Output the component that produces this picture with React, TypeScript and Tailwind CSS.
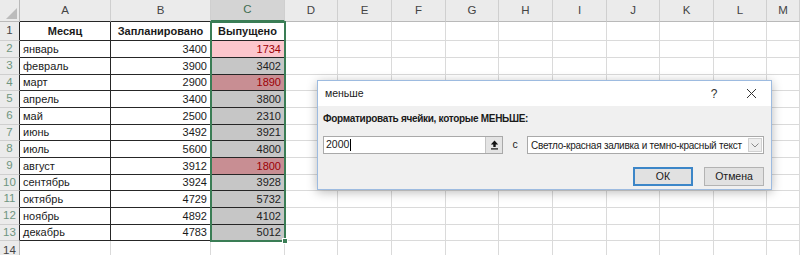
import React from "react";

const months = ["январь","февраль","март","апрель","май","июнь","июль","август","сентябрь","октябрь","ноябрь","декабрь"];
const planned = [3400,3900,2900,3400,2500,3492,5600,3912,3924,4729,4892,4783];
const released = [1734,3402,1890,3800,2310,3921,4800,1800,3928,5732,4102,5012];

const rowHeights = [19,17,17,16,17,17,16,17,17,16,17,17,16,20];
const extraCols = [
  { l: "D", w: "w-[53px]" },
  { l: "E", w: "w-[54px]" },
  { l: "F", w: "w-[54px]" },
  { l: "G", w: "w-[53px]" },
  { l: "H", w: "w-[54px]" },
  { l: "I", w: "w-[54px]" },
  { l: "J", w: "w-[53px]" },
  { l: "K", w: "w-[54px]" },
  { l: "L", w: "w-[53px]" },
  { l: "M", w: "w-[33px]" },
];

function cFill(i: number) {
  if (i === 0) return "bg-[#fcc6cc] text-[#9c0006]";
  if (i === 2 || i === 7) return "bg-[#c88e93] text-[#9c0006]";
  return "bg-[#c6c6c6] text-[#222]";
}

export default function App() {
  return (
    <div className="relative w-[800px] h-[255px] overflow-hidden bg-white font-['Liberation_Sans',Arial,sans-serif] text-[11px] text-[#1a1a1a]">
      {/* Column header row */}
      <div className="flex h-[22px] bg-[#ebebeb] text-[#444] text-[11.5px]">
        <div className="relative w-[20px] border-r border-b border-[#b9b9b9]">
          <svg className="absolute left-0 top-0" width="20" height="22" viewBox="0 0 20 22">
            <polygon points="17,8 17,19 6,19" fill="#bcbcbc" />
          </svg>
        </div>
        <div className="w-[91px] flex items-center justify-center border-r border-b border-r-[#cfcfcf] border-b-[#262626]">A</div>
        <div className="w-[100px] flex items-center justify-center border-r border-b border-r-[#cfcfcf] border-b-[#262626]">B</div>
        <div className="w-[74px] flex items-center justify-center bg-[#d4d4d4] text-[#3f6e52] border-r border-b-2 border-r-[#cfcfcf] border-b-[#3a7d55]">C</div>
        {extraCols.map((c) => (
          <div key={c.l} className={`${c.w} flex items-center justify-center border-r border-b border-r-[#cfcfcf] border-b-[#b9b9b9]`}>
            {c.l}
          </div>
        ))}
      </div>

      {rowHeights.map((h, r) => {
        const isData = r >= 1 && r <= 12;
        const inTable = r <= 12;
        const hClass =
          h === 19 ? "h-[19px]" : h === 17 ? "h-[17px]" : h === 16 ? "h-[16px]" : "h-[20px]";
        const tb = inTable ? "border-[#262626]" : "border-[#dadada]";
        return (
          <div key={r} className={`flex ${hClass}`}>
            <div
              className={`w-[20px] flex items-center justify-center bg-[#ebebeb] text-[11.5px] border-b border-r ${
                inTable ? "border-b-[#cfcfcf] border-r-[#262626]" : "border-b-[#cfcfcf] border-r-[#b9b9b9]"
              } ${isData ? "text-[#6f9580]" : "text-[#444]"}`}
            >
              {r + 1}
            </div>
            <div className={`w-[91px] flex items-center px-[3px] border-r border-b ${tb} ${r === 0 ? "justify-center font-bold" : ""}`}>
              {r === 0 ? "Месяц" : isData ? months[r - 1] : ""}
            </div>
            <div className={`w-[100px] flex items-center px-[3px] border-r border-b ${tb} ${r === 0 ? "justify-center font-bold" : "justify-end"}`}>
              {r === 0 ? "Запланировано" : isData ? planned[r - 1] : ""}
            </div>
            <div
              className={`w-[74px] flex items-center px-[3px] border-r border-b ${tb} ${
                r === 0 ? "justify-center font-bold" : "justify-end"
              } ${isData ? cFill(r - 1) : ""}`}
            >
              {r === 0 ? "Выпущено" : isData ? released[r - 1] : ""}
            </div>
            {extraCols.map((c) => (
              <div key={c.l} className={`${c.w} border-r border-b border-[#dadada]`} />
            ))}
          </div>
        );
      })}

      {/* selection rectangle C1:C13 */}
      <div className="absolute left-[210px] top-[21px] w-[76px] h-[221px] border-2 border-[#3a7d55] pointer-events-none" />
      <div className="absolute left-[282px] top-[238px] w-[6px] h-[6px] bg-[#3a7d55] border border-white" />

      {/* Dialog */}
      <div className="absolute left-[317px] top-[80px] w-[455px] h-[110px] flex flex-col border border-[#9dbbe0] bg-[#f0f0f0] shadow-[0_2px_10px_rgba(0,0,0,0.28)] font-['Liberation_Sans',Arial,sans-serif] text-[10.5px] text-[#1a1a1a]">
        <div className="h-[25px] bg-white flex items-center pl-[7px]">
          <span className="flex-1">меньше</span>
          <span className="w-[20px] text-center text-[12px] text-[#333] mr-[17px]">?</span>
          <span className="w-[20px] flex items-center justify-center mr-[10px]">
            <svg width="11" height="11" viewBox="0 0 11 11">
              <path d="M1 1 L10 10 M10 1 L1 10" stroke="#333" strokeWidth="1" fill="none" />
            </svg>
          </span>
        </div>
        <div className="flex-1 flex flex-col px-[5px]">
          <div className="mt-[6px] h-[14px] leading-[14px] font-bold text-[10px] tracking-[-0.3px]">Форматировать ячейки, которые МЕНЬШЕ:</div>
          <div className="mt-[10px] flex items-center h-[18px]">
            <div className="w-[180px] h-full flex items-center bg-white border border-[#a9a9a9]">
              <span className="flex-1 pl-[2px] flex items-center">
                2000<span className="inline-block w-px h-[12px] bg-black ml-px" />
              </span>
              <span className="w-[17px] h-full flex items-center justify-center bg-[#e4e4e4] border-l border-[#c4c4c4]">
                <svg width="9" height="10" viewBox="0 0 9 10">
                  <path d="M4.5 0.5 L0.8 4.5 H3.3 V7 H5.7 V4.5 H8.2 Z" fill="#111" />
                  <rect x="1" y="8.3" width="7" height="1.2" fill="#111" />
                </svg>
              </span>
            </div>
            <span className="w-[24px] text-center">с</span>
            <div className="w-[237px] h-full flex items-center bg-white border border-[#a9a9a9]">
              <span className="flex-1 pl-[3px] whitespace-nowrap text-[10px] tracking-[-0.25px]">Светло-красная заливка и темно-красный текст</span>
              <span className="w-[14px] h-[14px] mr-[1px] flex items-center justify-center bg-[#eeeeee] border border-[#d0d0d0]">
                <svg width="8" height="5" viewBox="0 0 8 5">
                  <path d="M0.5 0.5 L4 4 L7.5 0.5" stroke="#8a8a8a" strokeWidth="1" fill="none" />
                </svg>
              </span>
            </div>
          </div>
          <div className="mt-[13px] flex justify-end gap-[11px] pr-[2px]">
            <div className="w-[60px] h-[19px] flex items-center justify-center bg-[#e1e1e1] border-2 border-[#3c86c8]">ОК</div>
            <div className="w-[60px] h-[19px] flex items-center justify-center bg-[#e1e1e1] border border-[#b3b3b3]">Отмена</div>
          </div>
        </div>
      </div>
    </div>
  );
}
